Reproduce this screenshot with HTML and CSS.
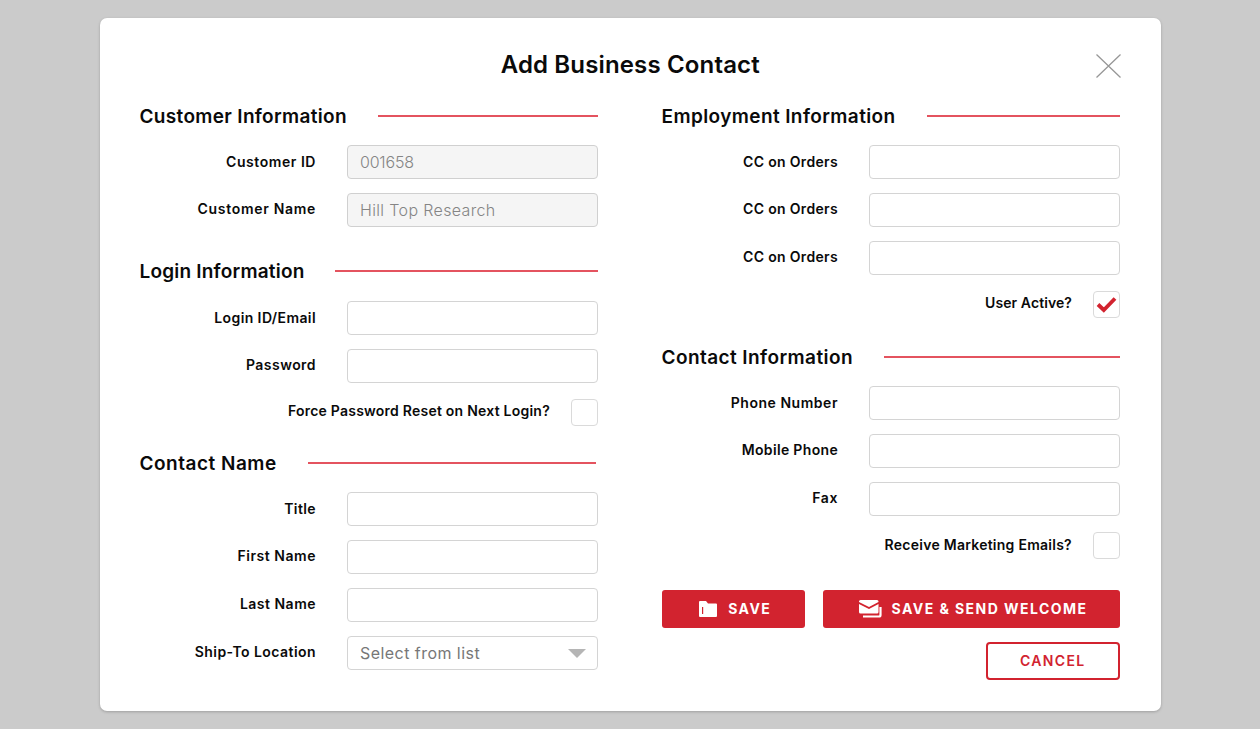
FILE: index.html
```html
<!DOCTYPE html>
<html lang="en">
<head>
<meta charset="utf-8">
<title>Add Business Contact</title>
<link rel="stylesheet" href="styles.css">
</head>
<body>
<div class="modal">
  <svg class="close" width="25" height="24" viewBox="0 0 25 24"><path d="M.5 .5 L24.500 23.500 M24.500 .5 L.5 23.500" fill="none" stroke="#979797" stroke-width="1.300"/></svg>
  <h1 class="title">Add Business Contact</h1>
  <div class="columns">
    <div class="col">
      <section class="sec">
        <div class="head"><h2 class="h-cust">Customer Information</h2><i class="rule"></i></div>
        <div class="row"><label class="t-a">Customer ID</label><input class="field ro num" value="001658" readonly></div>
        <div class="row"><label class="t-b">Customer Name</label><input class="field ro name" value="Hill Top Research" readonly></div>
      </section>
      <section class="sec sec-login">
        <div class="head"><h2 class="h-login">Login Information</h2><i class="rule"></i></div>
        <div class="row"><label class="t-c">Login ID/Email</label><input class="field"></div>
        <div class="row"><label class="t-d">Password</label><input class="field"></div>
        <div class="check-row"><label class="t-e">Force Password Reset on Next Login?</label><span class="box"></span></div>
      </section>
      <section class="sec sec-name">
        <div class="head head-short"><h2 class="h-name">Contact Name</h2><i class="rule"></i></div>
        <div class="row"><label class="t-f">Title</label><input class="field"></div>
        <div class="row"><label class="t-g">First Name</label><input class="field"></div>
        <div class="row"><label class="t-h">Last Name</label><input class="field"></div>
        <div class="row"><label class="t-i">Ship-To Location</label>
          <div class="select"><span class="select-text">Select from list</span><i class="caret"></i></div>
        </div>
      </section>
    </div>
    <div class="col">
      <section class="sec">
        <div class="head"><h2 class="h-emp">Employment Information</h2><i class="rule"></i></div>
        <div class="row"><label class="t-j">CC on Orders</label><input class="field"></div>
        <div class="row"><label class="t-j">CC on Orders</label><input class="field"></div>
        <div class="row"><label class="t-j">CC on Orders</label><input class="field"></div>
        <div class="check-row"><label class="t-k">User Active?</label><span class="box"><svg width="21" height="17" viewBox="0 0 21 17"><path d="M2 8.500 L7.800 14 L19 2.500" fill="none" stroke="#d2232f" stroke-width="3.800"/></svg></span></div>
      </section>
      <section class="sec sec-contact">
        <div class="head"><h2 class="h-contact">Contact Information</h2><i class="rule"></i></div>
        <div class="row"><label class="t-l">Phone Number</label><input class="field"></div>
        <div class="row"><label class="t-m">Mobile Phone</label><input class="field"></div>
        <div class="row"><label class="t-n">Fax</label><input class="field"></div>
        <div class="check-row"><label class="t-o">Receive Marketing Emails?</label><span class="box"></span></div>
      </section>
      <div class="actions">
        <button class="btn btn-save"><svg width="18" height="16" viewBox="0 0 18 16"><path fill-rule="evenodd" d="M1 0 H7 L9 2.500 H17 Q18 2.500 18 3.500 V15 Q18 16 17 16 H1 Q0 16 0 15 V1 Q0 0 1 0 Z M3 6 V13 H4.200 V6 Z" fill="#fff"/></svg><span>SAVE</span></button>
        <button class="btn btn-send"><svg width="23" height="19" viewBox="0 0 23 19"><path d="M1.500 0 H18 Q19.500 0 19.500 1.500 V2 L10 7 L0 2 V1.500 Q0 0 1.500 0 Z M0 4 L10 9 L19.500 4 V12 Q19.500 13.500 18 13.500 H1.500 Q0 13.500 0 12 Z" fill="#fff"/><path d="M4 16.500 H20 Q21.500 16.500 21.500 15 V7" fill="none" stroke="#fff" stroke-width="2.200"/></svg><span>SAVE &amp; SEND WELCOME</span></button>
      </div>
      <div class="cancel-line"><button class="btn-cancel">CANCEL</button></div>
    </div>
  </div>
</div>
</body>
</html>
```
FILE: styles.css
```css
* { box-sizing: border-box; }
html, body { margin: 0; height: 100%; }
body {
  background: #cbcbcb;
  font-family: "Inter", "Liberation Sans", sans-serif;
  color: #0a0a0a;
  overflow: hidden;
}
.modal {
  position: relative;
  width: 1061.500px;
  height: 693px;
  margin: 18px 0 0 99.500px;
  padding: 31px 40px 0 40px;
  background: #fff;
  border-radius: 7px;
  box-shadow: 0 1px 3px rgba(0,0,0,.22);
}
.close { position: absolute; left: 996px; top: 36px; }
.title {
  margin: 0;
  height: 32px;
  line-height: 31px;
  text-align: center;
  font-size: 24px;
  font-weight: 600;
  letter-spacing: .15px;
}
.columns { display: flex; gap: 63.500px; margin-top: 23px; }
.col { width: 458.500px; }
.head { display: flex; align-items: center; height: 24px; margin-bottom: 17px; }
.head h2 {
  margin: 0;
  font-size: 19px;
  font-weight: 600;
  white-space: nowrap;
}
.h-cust { letter-spacing: .33px; }
.h-login { letter-spacing: .2px; }
.h-name { letter-spacing: .5px; }
.h-emp { letter-spacing: .4px; }
.h-contact { letter-spacing: .42px; }
.rule { flex: 1; height: 2px; margin-left: 31px; background: #e4535f; }
.head-short .rule { margin-right: 2px; }
.sec-login .head { margin-bottom: 18px; }
.row { display: flex; align-items: center; height: 34px; margin-bottom: 14px; }
.row:last-child { margin-bottom: 0; }
.row label {
  flex: none;
  width: 176.500px;
  margin-bottom: 2px;
  text-align: right;
}
.row:nth-child(n+3) label { margin-bottom: 4px; }
label {
  font-size: 14px;
  font-weight: 600;
  white-space: nowrap;
}
.t-a { letter-spacing: .55px; }
.t-b { letter-spacing: .7px; }
.t-c { letter-spacing: .4px; }
.t-d { letter-spacing: .45px; }
.t-e { letter-spacing: .23px; }
.t-f { letter-spacing: .4px; }
.t-g { letter-spacing: .54px; }
.t-h { letter-spacing: .49px; }
.t-i { letter-spacing: .44px; }
.t-j { letter-spacing: .33px; }
.t-k { letter-spacing: .08px; }
.t-l { letter-spacing: .53px; }
.t-m { letter-spacing: .33px; }
.t-n { letter-spacing: .6px; }
.t-o { letter-spacing: .26px; }
.field, .select {
  flex: 1;
  min-width: 0;
  height: 34px;
  margin-left: 31px;
  padding: 0 12px;
  border: 1px solid #d4d4d4;
  border-radius: 4px;
  background: #fff;
  font-family: inherit;
  font-size: 16px;
  font-weight: 300;
  color: #858585;
  outline: none;
}
.ro { background: #f5f5f5; border-color: #d0d0d0; }
.num { letter-spacing: -.2px; }
.name { letter-spacing: .35px; }
.select { display: flex; align-items: center; justify-content: space-between; padding-right: 11px; }
.select-text { letter-spacing: .45px; color: #777; font-weight: 400; }
.caret {
  width: 0; height: 0;
  border-left: 9px solid transparent;
  border-right: 9px solid transparent;
  border-top: 9px solid #b5b5b5;
}
.check-row {
  display: flex;
  align-items: center;
  justify-content: flex-end;
  height: 27px;
  margin-top: 16px;
}
.check-row label { margin: 0 21px 4px 0; }
.check-row .t-o { margin-bottom: 2px; }
.box {
  display: flex;
  align-items: center;
  justify-content: center;
  width: 27px;
  height: 27px;
  border: 1px solid #dadada;
  border-radius: 4px;
  background: #fff;
}
.sec-login { margin-top: 32px; }
.sec-name { margin-top: 25px; }
.sec-contact { margin-top: 27px; }
.actions { display: flex; gap: 18px; margin-top: 31px; }
.btn {
  display: flex;
  align-items: center;
  justify-content: center;
  height: 38px;
  padding: 0 0 2px;
  border: 0;
  border-radius: 3px;
  background: #d2232f;
  color: #fff;
  font-family: inherit;
  font-size: 14px;
  font-weight: 700;
  letter-spacing: 1.45px;
}
.btn svg { margin-top: 2px; }
.btn-save { width: 143.500px; gap: 11px; padding-left: 4px; }
.btn-send { flex: 1; gap: 10px; padding-left: 3px; }
.cancel-line { display: flex; justify-content: flex-end; margin-top: 14px; }
.btn-cancel {
  width: 134.500px;
  height: 38px;
  padding: 0 0 2px;
  border: 2px solid #d2232f;
  border-radius: 4px;
  background: #fff;
  color: #d2232f;
  font-family: inherit;
  font-size: 14px;
  font-weight: 600;
  letter-spacing: 1.3px;
}
```
